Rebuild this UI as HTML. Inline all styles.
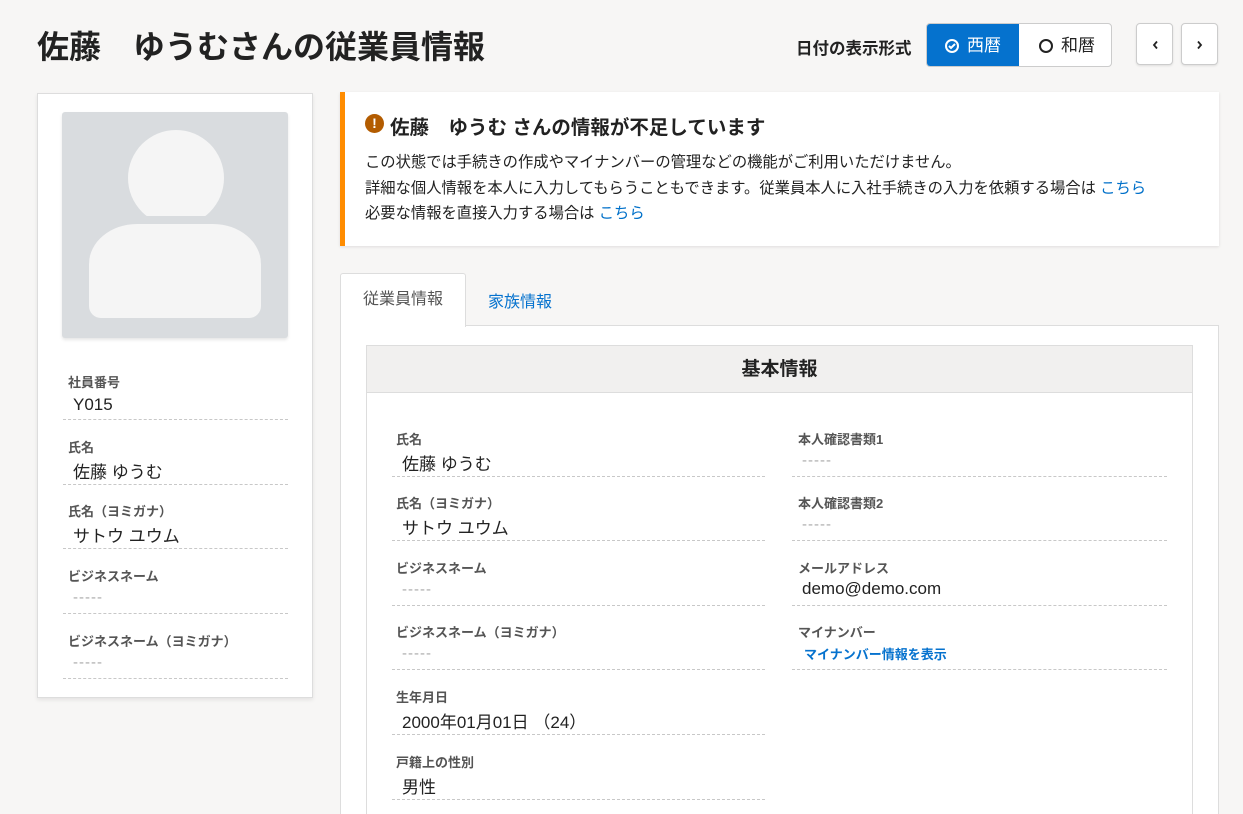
<!DOCTYPE html>
<html><head><meta charset="utf-8"><style>
*{box-sizing:border-box;margin:0;padding:0}
html,body{width:1243px;height:814px;overflow:hidden}
body{background:#f7f6f5;font-family:"Liberation Sans","Noto Sans CJK JP",sans-serif;color:#222;position:relative}
.abs{position:absolute}
h1{position:absolute;left:37px;top:22px;font-size:32px;font-weight:bold;color:#222}
.fld{position:absolute;border-bottom:1px dashed #c8c8c8;height:65px}
.fld .l{position:absolute;top:0;left:0;font-size:13px;font-weight:bold;color:#555}
.fld .v{position:absolute;top:20px;left:10px;font-size:17px;color:#222}
.fld .e{position:absolute;top:22px;left:10px;font-size:15px;color:#aaa;letter-spacing:1px}
a{color:#0070c9;text-decoration:none}
</style></head><body>
<h1>佐藤　ゆうむさんの従業員情報</h1>
<div class="abs" style="left:796px;top:35px;font-size:16.5px;font-weight:bold">日付の表示形式</div>
<div class="abs" style="left:926px;top:23px;width:186px;height:44px;border:1px solid #ccc;border-radius:4px;background:#fff;overflow:hidden">
 <div class="abs" style="left:0;top:0;width:92px;height:44px;background:#0572ce;color:#fff;font-size:17px;line-height:44px;padding-left:18px"><span style="display:inline-block;width:14px;height:14px;border:2px solid #fff;border-radius:50%;vertical-align:-2px;margin-right:8px;position:relative"><svg width="10" height="10" style="position:absolute;left:0;top:0" viewBox="0 0 10 10"><path d="M2 5l2 2 4-4" stroke="#fff" stroke-width="2" fill="none"/></svg></span>西暦</div>
 <div class="abs" style="left:92px;top:0;width:94px;height:44px;font-size:17px;line-height:44px;padding-left:20px"><span style="display:inline-block;width:14px;height:14px;border:2px solid #222;border-radius:50%;vertical-align:-2px;margin-right:8px"></span>和暦</div>
</div>
<div class="abs" style="left:1136px;top:23px;width:37px;height:42px;border:1px solid #ccc;border-radius:4px;background:#fff;box-shadow:0 1px 2px rgba(0,0,0,.1)"><svg width="37" height="42" viewBox="0 0 37 42"><path d="M20 17.5l-3 3.5 3 3.5" stroke="#222" stroke-width="1.8" fill="none"/></svg></div>
<div class="abs" style="left:1181px;top:23px;width:37px;height:42px;border:1px solid #ccc;border-radius:4px;background:#fff;box-shadow:0 1px 2px rgba(0,0,0,.1)"><svg width="37" height="42" viewBox="0 0 37 42"><path d="M16 17.5l3 3.5-3 3.5" stroke="#222" stroke-width="1.8" fill="none"/></svg></div>

<div class="abs" style="left:37px;top:93px;width:276px;height:605px;background:#fff;border:1px solid #ddd;box-shadow:0 2px 4px rgba(0,0,0,.08)">
 <div class="abs" style="left:24px;top:18px;width:226px;height:226px;background:#d9dcdf;border-radius:3px;overflow:hidden;box-shadow:0 2px 3px rgba(0,0,0,.1)">
  <div class="abs" style="left:66px;top:18px;width:96px;height:96px;border-radius:50%;background:#f5f5f5"></div>
  <div class="abs" style="left:27px;top:104px;width:172px;height:102px;border-radius:48px 48px 12px 12px;background:#f5f5f5;border-top:8px solid #d9dcdf"></div>
 </div>
 <div class="fld" style="left:25px;top:261px;width:225px"><div class="l" style="left:5px;top:17px">社員番号</div><div class="v" style="top:40px">Y015</div></div>
 <div class="fld" style="left:25px;top:326px;width:225px"><div class="l" style="left:5px;top:17px">氏名</div><div class="v" style="top:38px">佐藤 ゆうむ</div></div>
 <div class="fld" style="left:25px;top:390px;width:225px"><div class="l" style="left:5px;top:17px">氏名（ヨミガナ）</div><div class="v" style="top:38px">サトウ ユウム</div></div>
 <div class="fld" style="left:25px;top:455px;width:225px"><div class="l" style="left:5px;top:17px">ビジネスネーム</div><div class="e" style="top:40px">-----</div></div>
 <div class="fld" style="left:25px;top:520px;width:225px"><div class="l" style="left:5px;top:17px">ビジネスネーム（ヨミガナ）</div><div class="e" style="top:40px">-----</div></div>
</div>

<div class="abs" style="left:340px;top:92px;width:879px;height:154px;background:#fff;border-left:5px solid #ff8c00;box-shadow:0 1px 3px rgba(0,0,0,.1)">
 <div class="abs" style="left:20px;top:22px;width:19px;height:19px;border-radius:50%;background:#b35c00;color:#fff;font-size:14px;font-weight:bold;text-align:center;line-height:19px">!</div>
 <div class="abs" style="left:45px;top:19px;font-size:19.5px;font-weight:bold">佐藤　ゆうむ さんの情報が不足しています</div>
 <div class="abs" style="left:20px;top:58px;font-size:15.3px;line-height:25.5px;color:#222">この状態では手続きの作成やマイナンバーの管理などの機能がご利用いただけません。<br>詳細な個人情報を本人に入力してもらうこともできます。従業員本人に入社手続きの入力を依頼する場合は <a>こちら</a><br>必要な情報を直接入力する場合は <a>こちら</a></div>
</div>

<div class="abs" style="left:340px;top:325px;width:879px;height:500px;background:#fff;border:1px solid #ddd"></div>
<div class="abs" style="left:340px;top:273px;width:126px;height:54px;background:#fff;border:1px solid #ddd;border-bottom:none;border-radius:3px 3px 0 0;font-size:16px;color:#555;text-align:center;line-height:52px">従業員情報</div>
<div class="abs" style="left:488px;top:288px;font-size:16px;color:#0572ce">家族情報</div>

<div class="abs" style="left:366px;top:345px;width:827px;height:480px;border:1px solid #ddd;background:#fff">
 <div style="height:47px;background:#f1f0ef;border-bottom:1px solid #ddd;text-align:center;font-size:19px;font-weight:bold;line-height:47px">基本情報</div>
</div>
<div class="fld" style="left:392px;top:412px;width:373px"><div class="l" style="left:4px;top:17px">氏名</div><div class="v" style="top:38px">佐藤 ゆうむ</div></div>
<div class="fld" style="left:392px;top:476px;width:373px"><div class="l" style="left:4px;top:17px">氏名（ヨミガナ）</div><div class="v" style="top:38px">サトウ ユウム</div></div>
<div class="fld" style="left:392px;top:541px;width:373px"><div class="l" style="left:4px;top:17px">ビジネスネーム</div><div class="e" style="top:40px">-----</div></div>
<div class="fld" style="left:392px;top:605px;width:373px"><div class="l" style="left:4px;top:17px">ビジネスネーム（ヨミガナ）</div><div class="e" style="top:40px">-----</div></div>
<div class="fld" style="left:392px;top:670px;width:373px"><div class="l" style="left:4px;top:17px">生年月日</div><div class="v" style="top:38px">2000年01月01日 （24）</div></div>
<div class="fld" style="left:392px;top:735px;width:373px"><div class="l" style="left:4px;top:17px">戸籍上の性別</div><div class="v" style="top:38px">男性</div></div>

<div class="fld" style="left:792px;top:412px;width:375px"><div class="l" style="left:6px;top:17px">本人確認書類1</div><div class="e" style="top:40px">-----</div></div>
<div class="fld" style="left:792px;top:476px;width:375px"><div class="l" style="left:6px;top:17px">本人確認書類2</div><div class="e" style="top:40px">-----</div></div>
<div class="fld" style="left:792px;top:541px;width:375px"><div class="l" style="left:6px;top:17px">メールアドレス</div><div class="v" style="top:38px">demo@demo.com</div></div>
<div class="fld" style="left:792px;top:605px;width:375px"><div class="l" style="left:6px;top:17px">マイナンバー</div><div style="position:absolute;left:12px;top:39px;font-size:13px;font-weight:bold;color:#0572ce">マイナンバー情報を表示</div></div>
</body></html>
